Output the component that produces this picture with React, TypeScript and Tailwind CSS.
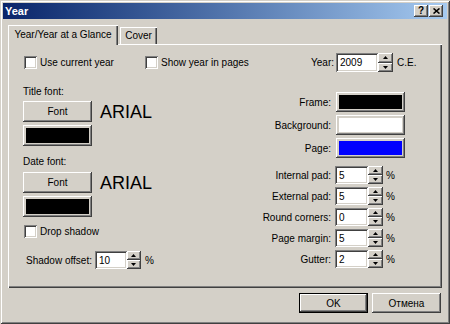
import React from "react";

const raised =
  "bg-[#d4d0c8] shadow-[inset_-1px_-1px_0_#404040,inset_1px_1px_0_#ffffff,inset_-2px_-2px_0_#808080,inset_2px_2px_0_#d4d0c8]";
const sunken =
  "bg-white shadow-[inset_1px_1px_0_#808080,inset_-1px_-1px_0_#ffffff,inset_2px_2px_0_#404040,inset_-2px_-2px_0_#d4d0c8]";

function Arrow({ up }: { up?: boolean }) {
  return (
    <svg width="5" height="3" viewBox="0 0 5 3">
      <path d={up ? "M2.5 0 L5 3 L0 3 Z" : "M0 0 L5 0 L2.5 3 Z"} fill="#000" />
    </svg>
  );
}

function Spin({ w }: { w: string }) {
  return (
    <div className={`${w} flex flex-col h-full`}>
      <div className={`${raised} flex-1 flex items-center justify-center`}>
        <Arrow up />
      </div>
      <div className={`${raised} flex-1 flex items-center justify-center`}>
        <Arrow />
      </div>
    </div>
  );
}

function NumField({
  value,
  w,
  spinW = "w-[15px]",
  h = "h-[18px]",
}: {
  value: string;
  w: string;
  spinW?: string;
  h?: string;
}) {
  return (
    <div className={`flex ${h}`}>
      <div className={`${sunken} ${w} flex items-center pl-[4px]`}>{value}</div>
      <Spin w={spinW} />
    </div>
  );
}

function Check({ label }: { label: string }) {
  return (
    <div className="flex items-center gap-[3px]">
      <div className={`${sunken} w-[13px] h-[13px]`} />
      <span>{label}</span>
    </div>
  );
}

function Swatch({ color }: { color: string }) {
  return (
    <div className={`${raised} w-[69px] h-[21px] p-[3px]`}>
      <div className={`${color} w-full h-full`} />
    </div>
  );
}

function FontRow() {
  return (
    <div className="flex items-center gap-[8px]">
      <div className={`${raised} w-[69px] h-[21px] flex items-center justify-center`}>Font</div>
      <span className="text-[18px] leading-none">ARIAL</span>
    </div>
  );
}

function ColorRow({ label, color }: { label: string; color: string }) {
  return (
    <div className="flex items-center h-[20px]">
      <span className="w-[100px] text-right">{label}</span>
      <div className={`${raised} ml-[5px] w-[69px] h-[20px] p-[3px]`}>
        <div className={`${color} w-full h-full`} />
      </div>
    </div>
  );
}

function PadRow({ label, value }: { label: string; value: string }) {
  return (
    <div className="flex items-center h-[18px]">
      <span className="w-[100px] text-right">{label}</span>
      <div className="ml-[4px]">
        <NumField value={value} w="w-[33px]" />
      </div>
      <span className="ml-[3px]">%</span>
    </div>
  );
}

export default function App() {
  return (
    <div className="w-[450px] h-[324px] bg-[#d4d0c8] flex flex-col text-[10px] text-black font-['Liberation_Sans',Arial,sans-serif] shadow-[inset_1px_1px_0_#d4d0c8,inset_-1px_-1px_0_#404040,inset_2px_2px_0_#ffffff,inset_-2px_-2px_0_#808080]">
      {/* title bar */}
      <div className="mx-[3px] mt-[3px] h-[16px] flex items-center pl-[2px] pr-[4px] bg-linear-to-r from-[#0a246a] to-[#a6caf0]">
        <span className="text-white font-bold text-[11px]">Year</span>
        <div className="ml-auto flex gap-[1px]">
          <div className={`${raised} w-[14px] h-[12px] flex items-center justify-center font-bold text-[10px] leading-none`}>?</div>
          <div className={`${raised} w-[14px] h-[12px] flex items-center justify-center`}>
            <svg width="7" height="6" viewBox="0 0 7 6">
              <path d="M0.5 0.5 L6.5 5.5 M6.5 0.5 L0.5 5.5" stroke="#000" strokeWidth="1.6" />
            </svg>
          </div>
        </div>
      </div>

      {/* tabs */}
      <div className="mt-[6px] h-[19px] pl-[8px] flex items-end">
        <div className="relative z-10 -mb-px h-[20px] w-[110px] bg-[#d4d0c8] flex items-center justify-center pb-[2px] shadow-[inset_1px_1px_0_#ffffff,inset_-1px_0_0_#404040,inset_-2px_0_0_#808080]">
          Year/Year at a Glance
        </div>
        <div className="ml-[2px] h-[17px] w-[37px] flex items-center justify-center shadow-[inset_1px_1px_0_#ffffff,inset_-1px_0_0_#404040,inset_-2px_0_0_#808080]">
          Cover
        </div>
      </div>

      {/* panel */}
      <div className="ml-[8px] w-[434px] h-[244px] flex flex-col pt-[9px] pl-[15px] shadow-[inset_1px_1px_0_#ffffff,inset_-1px_-1px_0_#404040,inset_-2px_-2px_0_#808080]">
        <div className="h-[19px] flex items-center">
          <div className="w-[122px] pl-[1px]">
            <Check label="Use current year" />
          </div>
          <div className="w-[166px]">
            <Check label="Show year in pages" />
          </div>
          <span>Year:</span>
          <div className="ml-[2px]">
            <NumField value="2009" w="w-[42px]" h="h-[19px]" />
          </div>
          <span className="ml-[4px]">C.E.</span>
        </div>

        <div className="flex">
          <div className="w-[208px] flex flex-col">
            <div className="mt-[14px] h-[12px] leading-[12px]">Title font:</div>
            <div className="mt-[3px]">
              <FontRow />
            </div>
            <div className="mt-[3px]">
              <Swatch color="bg-black" />
            </div>
            <div className="mt-[10px] h-[12px] leading-[12px]">Date font:</div>
            <div className="mt-[4px]">
              <FontRow />
            </div>
            <div className="mt-[3px]">
              <Swatch color="bg-black" />
            </div>
            <div className="mt-[7px] pl-[1px]">
              <Check label="Drop shadow" />
            </div>
            <div className="mt-[12px] h-[18px] flex items-center pl-[3px]">
              <span>Shadow offset:</span>
              <div className="ml-[3px]">
                <NumField value="10" w="w-[32px]" spinW="w-[14px]" />
              </div>
              <span className="ml-[4px]">%</span>
            </div>
          </div>

          <div className="flex flex-col">
            <div className="mt-[20px]">
              <ColorRow label="Frame:" color="bg-black" />
            </div>
            <div className="mt-[3px]">
              <ColorRow label="Background:" color="bg-white" />
            </div>
            <div className="mt-[3px]">
              <ColorRow label="Page:" color="bg-[#0000ff]" />
            </div>
            <div className="mt-[8px]">
              <PadRow label="Internal pad:" value="5" />
            </div>
            <div className="mt-[3px]">
              <PadRow label="External pad:" value="5" />
            </div>
            <div className="mt-[3px]">
              <PadRow label="Round corners:" value="0" />
            </div>
            <div className="mt-[3px]">
              <PadRow label="Page margin:" value="5" />
            </div>
            <div className="mt-[3px]">
              <PadRow label="Gutter:" value="2" />
            </div>
          </div>
        </div>
      </div>

      {/* buttons */}
      <div className="mt-[5px] flex justify-end gap-[4px] pr-[9px]">
        <div className="w-[69px] h-[20px] border border-black">
          <div className={`${raised} w-full h-full flex items-center justify-center`}>OK</div>
        </div>
        <div className={`${raised} w-[69px] h-[20px] flex items-center justify-center`}>Отмена</div>
      </div>
    </div>
  );
}
